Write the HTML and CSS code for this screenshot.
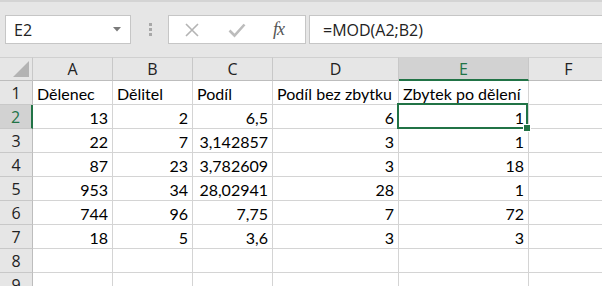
FILE: index.html
```html
<!DOCTYPE html>
<html lang="cs">
<head>
  <meta charset="UTF-8">
  <title>Zbytek po dělení</title>
  <link rel="stylesheet" href="styles.css">
</head>
<body>
  <div class="formula-bar">
    <div class="name-box">
      <span>E2</span>
      <svg class="drop" width="8" height="5" viewBox="0 0 8 5"><path d="M0 0h8L4 4.5z" fill="#7a7a7a"/></svg>
    </div>
    <div class="grip"><i></i><i></i><i></i></div>
    <div class="fx-box">
      <svg class="ico" width="16" height="16" viewBox="0 0 16 16"><path d="M2 2L14 14M14 2L2 14" stroke="#b4b4b4" stroke-width="1.6" fill="none"/></svg>
      <svg class="ico" width="18" height="16" viewBox="0 0 18 16"><path d="M1.5 8.5L6.5 13.5L16.5 2.5" stroke="#bcbcbc" stroke-width="2.6" fill="none"/></svg>
      <span class="fx">fx</span>
    </div>
    <div class="formula">=MOD(A2;B2)</div>
  </div>

  <div class="sheet">
    <div class="hdr corner"><svg width="16" height="16" viewBox="0 0 16 16"><path d="M16 0V16H0z" fill="#b3b3b3"/></svg></div>
    <div class="hdr">A</div>
    <div class="hdr">B</div>
    <div class="hdr">C</div>
    <div class="hdr">D</div>
    <div class="hdr sel">E</div>
    <div class="hdr">F</div>

    <div class="rh">1</div>
    <div class="cell">Dělenec</div>
    <div class="cell">Dělitel</div>
    <div class="cell">Podíl</div>
    <div class="cell">Podíl bez zbytku</div>
    <div class="cell">Zbytek po dělení</div>
    <div class="cell"></div>

    <div class="rh sel">2</div>
    <div class="cell num">13</div>
    <div class="cell num">2</div>
    <div class="cell num">6,5</div>
    <div class="cell num">6</div>
    <div class="cell num active">1</div>
    <div class="cell"></div>

    <div class="rh">3</div>
    <div class="cell num">22</div>
    <div class="cell num">7</div>
    <div class="cell num">3,142857</div>
    <div class="cell num">3</div>
    <div class="cell num">1</div>
    <div class="cell"></div>

    <div class="rh">4</div>
    <div class="cell num">87</div>
    <div class="cell num">23</div>
    <div class="cell num">3,782609</div>
    <div class="cell num">3</div>
    <div class="cell num">18</div>
    <div class="cell"></div>

    <div class="rh">5</div>
    <div class="cell num">953</div>
    <div class="cell num">34</div>
    <div class="cell num">28,02941</div>
    <div class="cell num">28</div>
    <div class="cell num">1</div>
    <div class="cell"></div>

    <div class="rh">6</div>
    <div class="cell num">744</div>
    <div class="cell num">96</div>
    <div class="cell num">7,75</div>
    <div class="cell num">7</div>
    <div class="cell num">72</div>
    <div class="cell"></div>

    <div class="rh">7</div>
    <div class="cell num">18</div>
    <div class="cell num">5</div>
    <div class="cell num">3,6</div>
    <div class="cell num">3</div>
    <div class="cell num">3</div>
    <div class="cell"></div>

    <div class="rh">8</div>
    <div class="cell"></div>
    <div class="cell"></div>
    <div class="cell"></div>
    <div class="cell"></div>
    <div class="cell"></div>
    <div class="cell"></div>

    <div class="rh">9</div>
    <div class="cell"></div>
    <div class="cell"></div>
    <div class="cell"></div>
    <div class="cell"></div>
    <div class="cell"></div>
    <div class="cell"></div>
  </div>
</body>
</html>
```

FILE: styles.css
```css
body {
  margin: 0;
  overflow: hidden;
  background: #fff;
  font-family: "Open Sans", "Noto Sans", sans-serif;
}

/* Řádek vzorců */
.formula-bar {
  display: flex;
  align-items: center;
  height: 55px;
  padding-left: 5px;
  border-top: 2px solid #d4d4d4;
  background: #e6e6e6;
  box-sizing: content-box;
}

.name-box {
  display: flex;
  align-items: center;
  justify-content: space-between;
  width: 126px;
  height: 29px;
  padding: 0 9px 0 8px;
  box-sizing: border-box;
  background: #fff;
  border: 1px solid #c6c6c6;
  font-size: 16px;
  color: #222;
}

.grip {
  display: flex;
  flex-direction: column;
  gap: 2px;
  margin: 0 16px 0 18px;
}

.grip i {
  display: block;
  width: 3px;
  height: 3px;
  background: #a8a8a8;
}

.fx-box {
  display: flex;
  align-items: center;
  width: 138px;
  height: 29px;
  padding-left: 15px;
  box-sizing: border-box;
  background: #fff;
  border: 1px solid #c6c6c6;
}

.fx-box .ico {
  margin-right: 28px;
}

.fx-box .ico + .ico {
  margin-right: 27px;
}

.fx {
  font-family: "Liberation Serif", serif;
  font-style: italic;
  font-size: 18px;
  color: #555;
  letter-spacing: -1px;
}

.formula {
  flex: 1;
  display: flex;
  align-items: center;
  height: 29px;
  margin-left: 3px;
  padding-left: 13px;
  box-sizing: border-box;
  background: #fff;
  border: 1px solid #c6c6c6;
  border-right: none;
  font-size: 16px;
  color: #222;
}

/* List */
.sheet {
  display: grid;
  grid-template-columns: 33px 80px 80px 80px 126px 130px 80px;
  grid-auto-rows: 24px;
}

.sheet > div {
  box-sizing: border-box;
  border-right: 1px solid #d4d4d4;
  border-bottom: 1px solid #d4d4d4;
}

.hdr {
  display: flex;
  align-items: center;
  justify-content: center;
  background: #e6e6e6;
  border-top: 1px solid #d0d0d0;
  font-size: 16px;
  color: #222;
}

.sheet > .hdr {
  border-right-color: #c8c8c8;
  border-bottom-color: #bdbdbd;
}

.corner {
  justify-content: flex-end;
  align-items: flex-end;
  padding: 0 3px 3px 0;
}

.rh {
  display: flex;
  align-items: center;
  justify-content: center;
  background: #e6e6e6;
  font-size: 16px;
  color: #222;
}

.sheet > .rh {
  border-right-color: #bdbdbd;
  border-bottom-color: #c8c8c8;
}

.sheet > .hdr.sel {
  background: #d2d2d2;
  color: #217346;
  border-bottom: 2px solid #217346;
}

.sheet > .rh.sel {
  background: #d2d2d2;
  color: #217346;
  border-right: 2px solid #217346;
}

.cell {
  padding: 1px 4px 0 4px;
  font-family: Lato, "Liberation Sans", sans-serif;
  font-size: 16px;
  line-height: 23px;
  color: #000;
  white-space: nowrap;
}

.num {
  text-align: right;
}

.active {
  position: relative;
}

.active::after {
  content: "";
  position: absolute;
  left: -2px;
  top: -2px;
  right: 0;
  bottom: -1px;
  border: 2px solid #217346;
}

.active::before {
  content: "";
  position: absolute;
  right: -3px;
  bottom: -4px;
  width: 6px;
  height: 6px;
  background: #217346;
  border: 1px solid #fff;
  z-index: 1;
}
```
